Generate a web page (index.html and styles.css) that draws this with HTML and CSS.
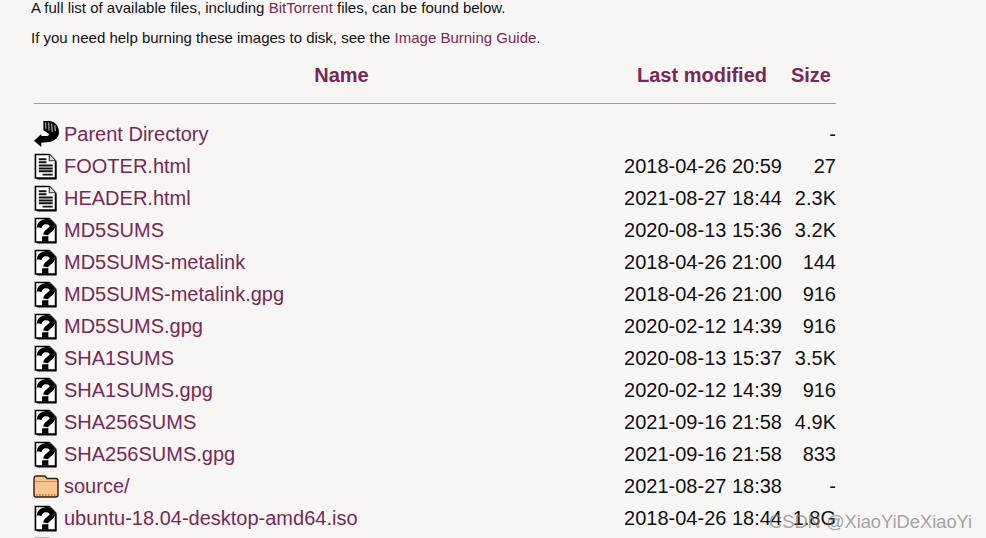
FILE: index.html
```html
<!DOCTYPE html>
<html lang="en">
<head>
<meta charset="utf-8">
<title>Ubuntu 18.04 files</title>
<link rel="stylesheet" href="styles.css">
</head>
<body>
<svg class="defs" width="0" height="0" aria-hidden="true">
  <defs>
    <symbol id="page" viewBox="0 0 24 28">
      <path d="M1.500 1.500H16L22.500 8V26H1.500Z" fill="#fff" stroke="#000" stroke-width="1.700"/>
      <path d="M16 1.500V8H22.500" fill="#ddd" stroke="#333" stroke-width="1.300"/>
      <path d="M22.800 9V26.800H3" fill="none" stroke="#000" stroke-width="1.500"/>
    </symbol>
    <symbol id="text" viewBox="0 0 24 28">
      <use href="#page"/>
      <path d="M5 6.500H13M5 9.500H13M5 13H19.500M5 16H19.500M5 19H19.500M9 22.500H19.500" stroke="#111" stroke-width="2"/>
    </symbol>
    <symbol id="unknown" viewBox="0 0 24 28">
      <use href="#page"/>
      <path d="M5.500 11C6 3 19 3 19 9.500C19 14 13 14 12 18.500" fill="none" stroke="#000" stroke-width="5.500"/>
      <rect x="8.500" y="20" width="6.500" height="5.500" fill="#000"/>
    </symbol>
    <symbol id="folder" viewBox="0 0 26 23">
      <path d="M1 6V3.500C1 2 2 1 3.500 1H11C12.500 1 13 2 14 3.500H22.500C24 3.500 25 4.500 25 6V20C25 21.500 24 22 22.500 22H3.500C2 22 1 21.500 1 20Z" fill="#f9c78c" stroke="#2a1f12" stroke-width="1.400"/>
      <path d="M2 6.500H24" stroke="#c08d58" stroke-width="1"/>
      <path d="M3 20H23" stroke="#a8743f" stroke-width="1.300" stroke-dasharray="1.500 1.500"/>
    </symbol>
    <symbol id="back" viewBox="0 0 24 25">
      <path d="M9 0H15C21 1 24 5 24 11C24 17 18 20 12 20.500L7 21V25L0 19L7 12.500V14.500H12C14 14.500 15 13 14 12L9 9Z" fill="#000"/>
      <path d="M11 1.500L11.500 7.500M14 1.500L14.500 9M17 2.500L17.500 10.500M20 4L20.500 10" stroke="#a5a5a5" stroke-width="1.200"/>
    </symbol>
  </defs>
</svg>
<main class="page">
  <p class="intro first">A full list of available files, including <a href="#">BitTorrent</a> files, can be found below.</p>
  <p class="intro">If you need help burning these images to disk, see the <a href="#">Image Burning Guide</a>.</p>
  <table class="listing">
    <thead>
      <tr class="heads">
        <th class="c-icon"></th>
        <th class="c-name">Name</th>
        <th class="c-date">Last modified</th>
        <th class="c-size">Size</th>
      </tr>
      <tr class="rule-row"><th colspan="4"><hr class="rule"></th></tr>
    </thead>
    <tbody>
      <tr><td><svg class="ico ico-back"><use href="#back"/></svg></td><td><a href="#">Parent Directory</a></td><td class="date"></td><td class="size">-</td></tr>
      <tr><td><svg class="ico"><use href="#text"/></svg></td><td><a href="#">FOOTER.html</a></td><td class="date">2018-04-26 20:59</td><td class="size">27</td></tr>
      <tr><td><svg class="ico"><use href="#text"/></svg></td><td><a href="#">HEADER.html</a></td><td class="date">2021-08-27 18:44</td><td class="size">2.3K</td></tr>
      <tr><td><svg class="ico"><use href="#unknown"/></svg></td><td><a href="#">MD5SUMS</a></td><td class="date">2020-08-13 15:36</td><td class="size">3.2K</td></tr>
      <tr><td><svg class="ico"><use href="#unknown"/></svg></td><td><a href="#">MD5SUMS-metalink</a></td><td class="date">2018-04-26 21:00</td><td class="size">144</td></tr>
      <tr><td><svg class="ico"><use href="#unknown"/></svg></td><td><a href="#">MD5SUMS-metalink.gpg</a></td><td class="date">2018-04-26 21:00</td><td class="size">916</td></tr>
      <tr><td><svg class="ico"><use href="#unknown"/></svg></td><td><a href="#">MD5SUMS.gpg</a></td><td class="date">2020-02-12 14:39</td><td class="size">916</td></tr>
      <tr><td><svg class="ico"><use href="#unknown"/></svg></td><td><a href="#">SHA1SUMS</a></td><td class="date">2020-08-13 15:37</td><td class="size">3.5K</td></tr>
      <tr><td><svg class="ico"><use href="#unknown"/></svg></td><td><a href="#">SHA1SUMS.gpg</a></td><td class="date">2020-02-12 14:39</td><td class="size">916</td></tr>
      <tr><td><svg class="ico"><use href="#unknown"/></svg></td><td><a href="#">SHA256SUMS</a></td><td class="date">2021-09-16 21:58</td><td class="size">4.9K</td></tr>
      <tr><td><svg class="ico"><use href="#unknown"/></svg></td><td><a href="#">SHA256SUMS.gpg</a></td><td class="date">2021-09-16 21:58</td><td class="size">833</td></tr>
      <tr><td><svg class="ico ico-folder"><use href="#folder"/></svg></td><td><a href="#">source/</a></td><td class="date">2021-08-27 18:38</td><td class="size">-</td></tr>
      <tr><td><svg class="ico"><use href="#unknown"/></svg></td><td><a href="#">ubuntu-18.04-desktop-amd64.iso</a></td><td class="date">2018-04-26 18:44</td><td class="size">1.8G</td></tr>
      <tr><td><svg class="ico"><use href="#text"/></svg></td><td></td><td class="date"></td><td class="size"></td></tr>
    </tbody>
  </table>
</main>
<div class="watermark">CSDN @XiaoYiDeXiaoYi</div>
</body>
</html>
```

FILE: styles.css
```css
html, body {
  margin: 0;
  height: 538px;
  overflow: hidden;
  background: #f7f6f5;
}
body {
  position: relative;
  font-family: "Liberation Sans", Arial, sans-serif;
  color: #111;
}
.defs { display: block; }
.page { padding-left: 31px; }
a { color: #772953; text-decoration: none; }
.intro {
  margin: 0 0 11px;
  font-size: 15px;
  line-height: 17px;
}
.first { margin: -1px 0 13px; }
.listing {
  border-collapse: collapse;
  table-layout: fixed;
  width: 802px;
  margin: 0 0 0 3px;
  font-size: 20px;
}
.listing th, .listing td { padding: 0; box-sizing: border-box; }
.c-icon { width: 30px; }
.c-name { width: 560px; }
.c-date { width: 158px; }
.heads th {
  height: 36px;
  color: #772953;
  font-size: 20px;
  font-weight: 700;
  text-align: center;
  vertical-align: middle;
}
.listing .heads .c-name { padding-right: 5px; }
.listing .heads .c-date { text-align: right; padding-right: 15px; }
.listing .heads .c-size { text-align: right; padding-right: 5px; }
.rule-row th { height: 25px; vertical-align: top; }
.rule {
  margin: 10px 0 0;
  border: 0;
  height: 1px;
  background: #a09d9b;
}
tbody tr { height: 32px; }
tbody td { vertical-align: middle; white-space: nowrap; line-height: 32px; }
.date { text-align: right; color: #111; }
.size { text-align: right; color: #111; }
.ico { display: block; width: 23px; height: 27px; }
.ico-back { width: 25px; height: 26px; }
.ico-folder { width: 26px; height: 23px; margin-left: -1px; }
.watermark {
  position: absolute;
  left: 769px;
  top: 510px;
  font-size: 18.3px;
  line-height: 24px;
  color: rgba(125, 125, 125, 0.7);
  white-space: nowrap;
}
```
